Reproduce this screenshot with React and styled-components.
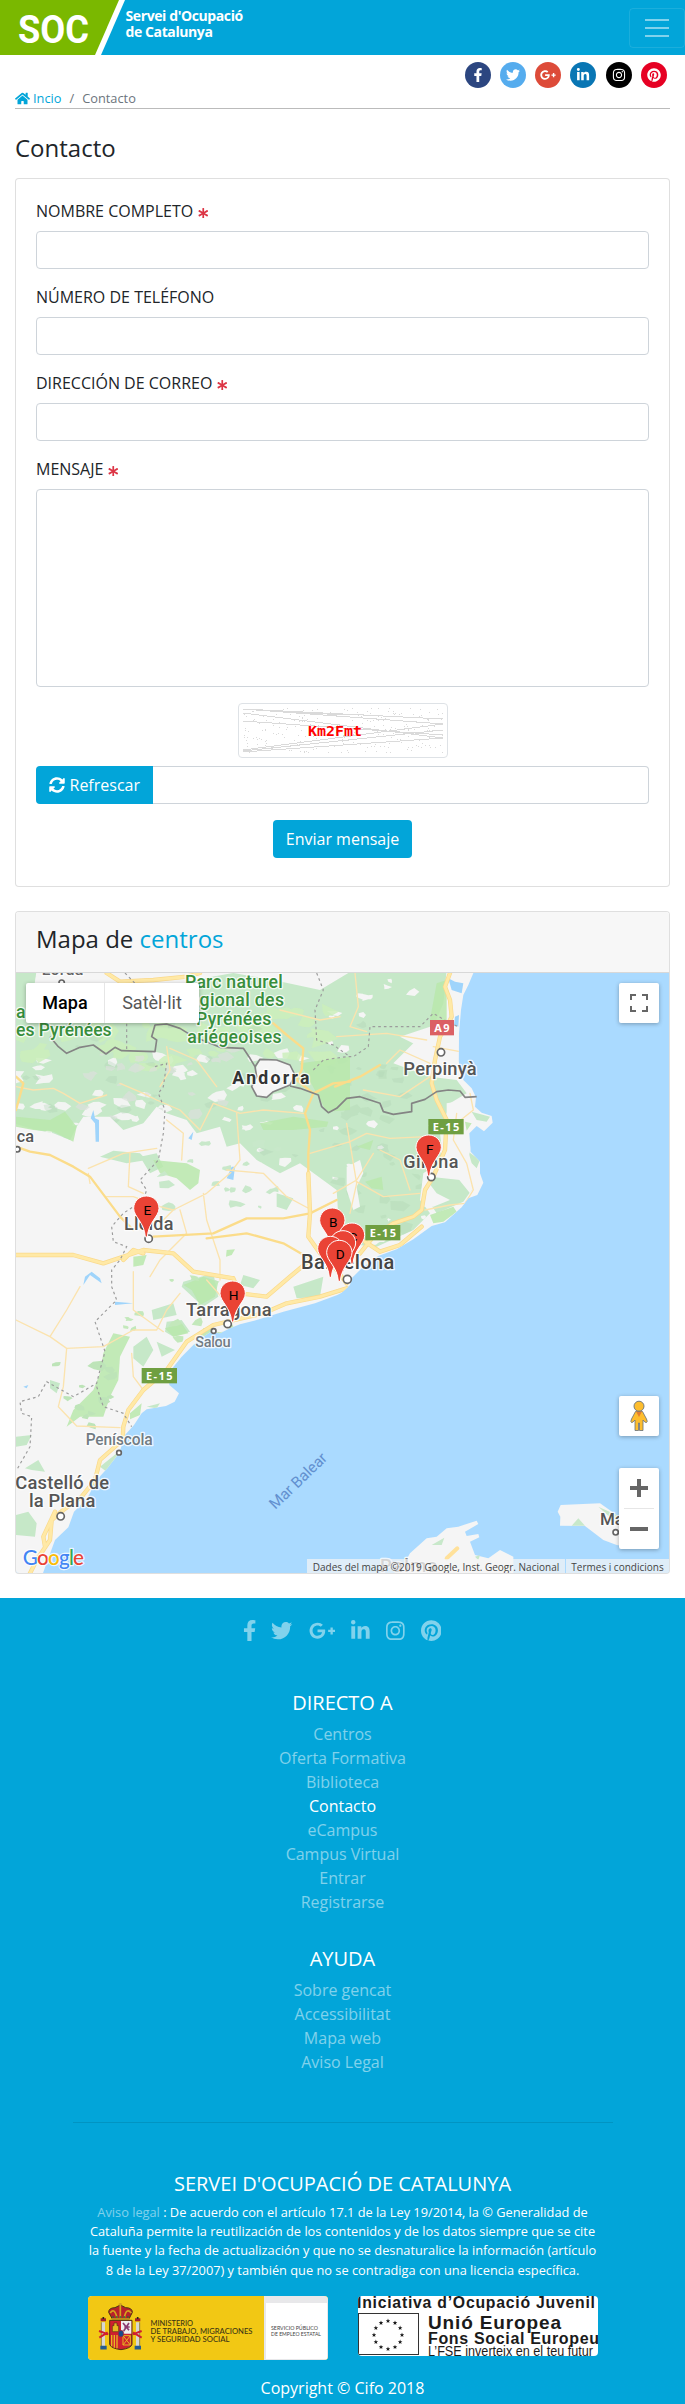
import React from "react";
import styled, { createGlobalStyle, css } from "styled-components";
import {
  FaFacebookF,
  FaTwitter,
  FaGooglePlusG,
  FaLinkedinIn,
  FaInstagram,
  FaPinterest,
  FaHome,
  FaSyncAlt,
  FaAsterisk,
} from "react-icons/fa";

const BLUE = "#02a5d9";

const GlobalStyle = createGlobalStyle`
  *, *::before, *::after { box-sizing: border-box; }
  body {
    margin: 0;
    background: #fff;
    color: #212529;
    font-family: "Open Sans", "Noto Sans", sans-serif;
    font-size: 16px;
    line-height: 1.5;
  }
  a { text-decoration: none; color: ${BLUE}; }
`;

/* ---------- header ---------- */

const Navbar = styled.header`
  display: flex;
  align-items: center;
  justify-content: space-between;
  height: 55px;
  background: ${BLUE};
`;

const Brand = styled.a`
  display: flex;
  height: 55px;
`;

const BrandName = styled.span`
  padding-top: 8px;
  color: #fff;
  font-size: 14px;
  font-weight: 700;
  line-height: 16px;
  letter-spacing: -0.4px;
`;

const Toggler = styled.button`
  width: 56px;
  height: 40px;
  padding: 0;
  display: flex;
  align-items: center;
  justify-content: center;
  background: transparent;
  border: 1px solid rgba(255, 255, 255, 0.1);
  border-radius: 4px;
`;

/* ---------- page ---------- */

const Container = styled.main`
  padding: 7px 15px 24px;
`;

const SocialBar = styled.nav`
  display: flex;
  justify-content: flex-end;
  gap: 9.3px;
  padding-right: 3px;
  height: 26px;
`;

const SocialBadge = styled.a`
  display: flex;
  align-items: center;
  justify-content: center;
  width: 26px;
  height: 26px;
  border-radius: 50%;
  color: #fff;
  font-size: ${(p) => p.$size || 14}px;
  background: ${(p) => p.$bg};
`;

const Breadcrumb = styled.nav`
  display: flex;
  height: 21px;
  font-size: 12.8px;
  line-height: 21px;
  color: #6c757d;
  border-bottom: 1px solid #bbb;

  a { display: flex; align-items: center; gap: 3px; }
  svg { font-size: 15px; }
  i { font-style: normal; padding: 0 8px; }
`;

const PageTitle = styled.h1`
  margin: 24px 0 16px;
  font-size: 24px;
  font-weight: 400;
  line-height: 29px;
`;

const Card = styled.section`
  border: 1px solid rgba(0, 0, 0, 0.125);
  border-radius: 4px;
  background: #fff;
  overflow: hidden;
`;

const FormCard = styled(Card)`
  height: 709px;
  padding: 20px;
`;

const Field = styled.div`
  margin-bottom: 16px;
`;

const Label = styled.label`
  display: flex;
  align-items: center;
  gap: 5px;
  height: 24px;
  margin-bottom: 8px;

  svg { color: #dc3545; font-size: 10.5px; margin-top: 4px; }
`;

const control = css`
  display: block;
  width: 100%;
  padding: 6px 12px;
  border: 1px solid #ced4da;
  border-radius: 4px;
  background: #fff;
  font: inherit;
  outline: none;
  resize: none;
`;

const Input = styled.input`
  ${control}
  height: 38px;
`;

const TextArea = styled.textarea`
  ${control}
  height: 198px;
`;

const Captcha = styled.div`
  display: flex;
  width: 210px;
  height: 55px;
  margin: 0 auto 8px;
  padding: 4px;
  border: 1px solid #dee2e6;
  border-radius: 4px;
`;

const InputGroup = styled.div`
  display: flex;
  margin-bottom: 16px;

  input { border-left: 0; border-radius: 0 4px 4px 0; }
`;

const Button = styled.button`
  display: flex;
  align-items: center;
  gap: 4.5px;
  flex: none;
  height: 38px;
  padding: 0 13px;
  border: 0;
  border-radius: ${(p) => (p.$joined ? "4px 0 0 4px" : "4px")};
  margin: ${(p) => (p.$joined ? "0" : "0 auto")};
  background: ${BLUE};
  color: #fff;
  font: inherit;
`;

const MapCard = styled(Card)`
  margin-top: 24px;
`;

const CardHeader = styled.h2`
  margin: 0;
  height: 61px;
  padding: 12px 20px;
  font-size: 24px;
  font-weight: 400;
  line-height: 29px;
  background: #f7f7f7;
  border-bottom: 1px solid rgba(0, 0, 0, 0.125);
`;

/* ---------- map ---------- */

const MapFrame = styled.div`
  position: relative;
  height: 600px;
  background: #aadaff;
  font-family: Roboto, sans-serif;

  > svg { display: block; }
`;

const MapControl = styled.div`
  position: absolute;
  display: flex;
  flex-direction: ${(p) => (p.$column ? "column" : "row")};
  align-items: center;
  justify-content: center;
  top: ${(p) => p.$top}px;
  ${(p) => (p.$left ? `left: ${p.$left}px;` : "right: 10px; width: 40px;")}
  height: ${(p) => p.$height || 40}px;
  background: #fff;
  border-radius: 2px;
  box-shadow: 0 1px 4px rgba(0, 0, 0, 0.3);
`;

const MapType = styled.span`
  width: ${(p) => p.$width}px;
  line-height: 40px;
  text-align: center;
  font-size: 18px;
  font-weight: ${(p) => (p.$active ? 500 : 400)};
  color: ${(p) => (p.$active ? "#000" : "#565656")};
  border-right: ${(p) => (p.$active ? "1px solid #e6e6e6" : "0")};
`;

const Attribution = styled.div`
  position: absolute;
  right: 0;
  bottom: 0;
  display: flex;
  gap: 1px;
  height: 14px;
  font: 10px/17px "Open Sans", sans-serif;
  color: #444;
  white-space: nowrap;

  span {
    background: rgba(245, 245, 245, 0.7);
    text-align: center;
  }
  span:first-child { width: 258px; }
  span:last-child { width: 103px; }
`;

/* ---------- footer ---------- */

const Footer = styled.footer`
  display: flex;
  flex-direction: column;
  align-items: center;
  height: 806px;
  padding-top: 21.5px;
  background: ${BLUE};
  color: #fff;
  text-align: center;
`;

const FooterSocial = styled.nav`
  display: flex;
  gap: 16px;
  height: 22px;
  margin: 0 0 48.5px;
  color: rgba(255, 255, 255, 0.5);
`;

const FooterIcon = styled.a`
  display: flex;
  justify-content: center;
  width: ${(p) => p.$width}px;
  height: 21.33px;
  color: inherit;

  svg { flex: none; width: ${(p) => Math.max(p.$width, 13.33)}px; height: 21.33px; }
`;

const FooterTitle = styled.h5`
  margin: 0 0 6px;
  font-size: 20px;
  font-weight: 400;
  line-height: 26px;
`;

const LinkList = styled.ul`
  list-style: none;
  margin: 0 0 32px;
  padding: 0;
`;

const FooterLink = styled.a`
  display: block;
  height: 24px;
  color: ${(p) => (p.$active ? "#fff" : "rgba(255,255,255,.5)")};
`;

const Divider = styled.hr`
  width: 540px;
  margin: 16px 0 48px;
  border: 0;
  border-top: 1px solid rgba(0, 0, 0, 0.1);
`;

const Legal = styled.p`
  width: 512px;
  margin: 0 0 16px;
  font-size: 12.8px;
  line-height: 19.2px;

  a { color: rgba(255, 255, 255, 0.5); }
`;

const Logos = styled.div`
  display: flex;
  align-items: flex-start;
  gap: 30px;
  height: 64px;
  margin: 0 0 16px 1px;
`;

const LogoBox = styled.div`
  width: 240px;
  height: ${(p) => p.$height}px;
  border-radius: 4px;
  overflow: hidden;
  background: #fff;

  svg { display: block; }
`;

/* ---------- drawings ---------- */

function rng(seed) {
  let s = seed;
  return () => {
    s = (s * 16807) % 2147483647;
    return s / 2147483647;
  };
}

function shards(seed, count, [x0, y0, x1, y1], min, max) {
  const r = rng(seed);
  let d = "";
  for (let i = 0; i < count; i++) {
    const cx = x0 + r() * (x1 - x0);
    const cy = y0 + r() * (y1 - y0);
    const size = min + r() * (max - min);
    const n = 5 + Math.floor(r() * 4);
    for (let k = 0; k < n; k++) {
      const a = (k / n) * Math.PI * 2;
      const q = size * (0.35 + r() * 0.75);
      d += `${k ? "L" : "M"}${(cx + Math.cos(a) * q * 1.25).toFixed(0)} ${(cy + Math.sin(a) * q * 0.75).toFixed(0)}`;
    }
    d += "Z";
  }
  return d;
}

const LAND =
  "M40 30H1424L1405 75 1390 105 1383 150 1377 220 1376 305 1390 360 1415 385 1428 412 1425 440 1445 458 1475 468 1478 488 1452 514 1430 498 1408 520 1412 575 1440 605 1440 640 1450 668 1432 705 1405 715 1385 742 1335 787 1295 798 1240 838 1190 868 1135 888 1085 925 1055 955 1050 975 1025 998 1012 1005 945 1030 850 1055 770 1080 720 1093 690 1105 660 1120 630 1117 595 1140 545 1190 505 1240 508 1275 537 1300 524 1325 498 1338 440 1348 425 1360 402 1395 375 1425 358 1478 322 1525 290 1560 262 1615 222 1655 205 1702 165 1740 125 1850H40Z";

const GREENS = [
  "M40 30H110L100 100 160 150 240 170 330 150 460 170 470 100 580 60 700 39 820 60 960 90 1060 30H1340L1330 130 1300 200 1240 250 1180 310 1290 350 1370 360 1400 400 1350 430 1320 520 1330 600 1270 640 1260 720 1290 760 1240 810 1130 860 1020 850 1010 690 900 610 840 640 770 600 720 550 680 560 660 500 590 520 560 480 500 460 470 440 430 490 370 510 330 470 250 470 230 500 210 540 160 520 110 510 40 490Z",
  "M820 130L960 120 1050 39V560L980 580 880 610 800 590 740 500 760 400 820 360 760 280Z",
  "M300 590L340 572 420 580 440 600 380 610Z", "M420 590L470 580 490 620 450 640Z",
  "M830 700L880 715 860 750 830 740Z", "M1000 840L1035 815 1050 850 1010 870Z",
  "M1290 650L1380 660 1415 690 1390 725 1310 760 1290 730Z", "M1405 575L1440 600 1430 625 1415 610Z",
  "M1415 455L1470 470 1460 485 1430 480Z", "M550 965L640 940 655 1010 610 1040 545 980Z",
  "M500 1085L545 1080 570 1115 520 1130 495 1115Z", "M455 1050L520 1030 530 1065 460 1080Z",
  "M880 980L970 950 960 1010 890 1015Z", "M730 945L780 960 760 985 720 975Z",
  "M400 1160L440 1130 460 1170 430 1220 400 1195Z", "M470 1145L525 1170 485 1190Z",
  "M150 1260L180 1270 170 1300 150 1285Z", "M48 1430L95 1425 80 1455 48 1460Z",
  "M75 1525L115 1500 135 1535 95 1530Z", "M48 1665L85 1655 110 1690 105 1730 48 1725Z",
  "M300 1520L350 1480 350 1505 320 1535Z", "M440 1370L475 1362 455 1385Z", "M440 1340L480 1330 470 1345Z",
];

const BRIGHT = [
  "M460 600L560 610 600 630 595 670 570 690 530 655 480 640Z",
  "M780 490L880 470 985 485 980 500 880 510 790 510Z",
  "M48 470L150 480 195 455 230 500 220 545 160 515 100 510 48 500Z",
  "M340 1120L390 1130 360 1190 355 1260 330 1310 310 1370 240 1370 200 1400 220 1350 280 1290 300 1240 310 1180Z",
  "M1095 665L1145 650 1150 690 1115 685Z", "M1290 765L1360 740 1370 755 1330 785 1300 790Z",
  "M550 975L610 950 655 965 645 1010 600 1035 575 990Z", "M400 890L440 885 430 915 400 920Z",
  "M680 870L705 868 695 885 678 890Z", "M495 1105L545 1090 565 1120 520 1130Z",
  "M390 1360L425 1330 420 1365 390 1378Z", "M1310 70L1290 180 1340 200 1340 60Z",
  "M900 310L1050 290V450L980 455 950 400Z", "M1395 485L1415 490 1400 512Z", "M1070 560L1120 540 1110 570Z",
];

const ROADS_THIN =
  "M360 370L430 400 470 420 540 450 600 510 640 430 720 460 790 450 910 460M500 260L510 330 480 380M510 265L590 300 650 380M500 480L550 520 545 600M710 460L720 600 690 640 620 700 520 750 480 790M48 1080L150 1130 200 1165 310 1160 400 1110 470 1110 500 1050 540 1000M200 1165L190 1280 175 1340 230 1398 360 1403M150 1130L200 1050 240 980M265 625L370 580 470 565M265 640L270 670M320 710L400 710 480 740 520 750M390 580L385 680 430 700M610 700L620 780 660 900 660 960M540 750L560 820 480 900 450 950M680 630L790 640 860 710 935 750M930 580L1050 545 1100 520 1170 535 1280 530M1040 490L1055 580 1070 670 1050 760M1070 665L1150 710 1260 700M1070 660L1000 700M1120 580L1070 660M1140 570L1200 600 1230 690M1370 460L1360 540 1400 610 1420 690 1395 730 1350 735 1275 750M1410 400L1420 450 1370 490M1090 390L1200 410 1290 350M1290 310L1200 270 1160 310M1380 275L1300 260M1010 230L1160 220 1280 240M1065 39L1075 140 1050 200 1100 215M840 150L960 180 1020 170M48 380L100 390 160 385 190 400 240 430 320 405M400 935L400 1050 490 1115M395 1180L400 1250 430 1290M620 960L690 1040";

const ROADS_MID =
  "M820 190L860 225 910 265 905 330 890 360 940 400 1000 370 1050 365M1005 380L1080 350 1140 315M940 400L915 460 930 510 925 580M48 350L70 370 48 450M925 640L925 580M48 560L90 575 150 585 220 620 270 650 360 770 400 810M460 830L640 820 740 775 850 775 930 760 1010 720M620 835L740 820 850 850 920 890";

const ROADS_BIG =
  "M320 39L360 65 460 60 560 50 600 39M1350 39L1335 80 1350 120 1355 170 1340 200 1320 230 1305 300 1295 370 1310 420 1340 480 1335 570 1300 650 1275 690 1265 750 1240 770 1180 790 1120 830 1080 880M925 640L930 760 925 830 960 880 1010 930 1040 970M1140 875L1200 855 1265 800M1140 875L1095 845M48 885L220 885 310 910 430 870 520 880 580 935 700 955M430 880L400 870 370 900M700 955L720 1000 800 1010 870 950 930 900M1040 985L960 1010 860 1030 790 1060 640 1095 560 1145 500 1230 430 1290 385 1350 370 1400 368 1440 300 1500 285 1560 245 1610 190 1650 155 1680 150 1740 110 1800 90 1840M165 1655L130 1730 135 1760";

const BORDER =
  "M150 230L175 260 200 280 240 262 280 255 318 282 345 262 365 272 465 275 470 240 455 230 465 195 500 192 540 205 580 230 620 245 660 262 730 265 750 295 765 320M765 320L780 298 830 300 870 315 885 345 870 375 820 395 800 412 770 408 755 380 770 350ZM870 378L900 385 955 405 965 440 985 458 1010 445 1040 415 1080 410 1140 430 1150 455 1180 463 1235 455 1235 430 1275 418 1310 395 1345 390 1380 393 1395 412 1430 410";

const DOTTED =
  "M375 39L405 70 380 120 380 270M465 320L500 310 490 380 475 400 495 450 490 520 475 600 420 660 440 690 430 720 370 760 335 800 340 845 380 860 360 900 335 930 335 980 350 1020 285 1085 300 1130 315 1175 300 1230 290 1270 220 1310 140 1265 115 1310 60 1325 65 1360 95 1370 90 1460 50 1530M290 1280L310 1340 370 1360 395 1400M940 330L970 300 1040 290 1060 290 1105 260 1110 200 1260 200 1300 160 1350 190 1375 200M950 39L970 90 945 150 950 240 1000 255 1050 290";

const WATER =
  "M280 450L285 475 297 480 297 545 287 545 285 490 272 475ZM565 535L580 515 575 540ZM695 620L705 620 700 660 680 655ZM255 950L275 935 300 955 305 970 270 945 250 975ZM345 1025L400 1030 345 1035ZM70 1280L85 1275 80 1285ZM1345 55L1365 65 1390 70 1385 100 1355 90ZM1365 170L1377 165 1375 200 1362 195Z";

const PLAINS =
  "M110 39H320L340 100 290 160 180 160 100 100ZM400 39H560L520 90 460 100 400 80ZM1200 230L1290 200 1376 200 1376 305 1390 360 1320 350 1260 340 1220 280 1260 260ZM1340 430L1400 420 1370 500 1412 560 1405 600 1440 640 1410 700 1370 650 1330 630 1320 570 1340 520ZM1040 620L1080 600 1090 640 1070 680 1080 740 1060 750 1040 690ZM1280 660L1310 700 1350 720 1300 740 1265 740ZM770 320L780 298 830 300 870 315 885 345 870 375 820 395 800 412 770 408 755 380Z";

const ISLANDS =
  "M1190 1850L1230 1780 1280 1735 1310 1730 1340 1705 1375 1700 1430 1682 1435 1692 1395 1715 1400 1728 1435 1722 1438 1732 1410 1745 1425 1785 1465 1795 1500 1770 1540 1790V1850ZM1673 1655L1682 1635 1800 1630 1850 1665 1880 1700 1880 1760 1850 1755 1810 1740 1755 1698 1680 1697 1681 1670Z";

const CITY_DOTS = [
  [185, 68, 8], [1323, 277, 11], [1294, 651, 11], [446, 836, 11], [1042, 958, 12],
  [683, 1092, 11], [641, 1113, 7], [357, 1478, 7], [182, 1669, 11], [52, 568, 8], [1847, 1717, 8],
];

const PLACES = [
  ["Lorda", 125, 45, 125, 48, "#666", 500],
  ["Parc naturel", 555, 84, 293, 53, "#388e3c", 500],
  ["régional des", 550, 139, 302, 53, "#388e3c", 500],
  ["Pyrénées", 588, 194, 226, 53, "#388e3c", 500],
  ["ariégeoises", 562, 249, 283, 53, "#388e3c", 500],
  ["a", 48, 173, 27, 53, "#388e3c", 500],
  ["es Pyrénées", 48, 228, 287, 53, "#388e3c", 500],
  ["Andorra", 697, 373, 231, 53, "#333", 700],
  ["Perpinyà", 1210, 344, 220, 55, "#555", 500],
  ["Girona", 1210, 624, 165, 54, "#555", 500],
  ["Lleida", 372, 811, 148, 54, "#555", 500],
  ["Barcelona", 903, 926, 280, 60, "#444", 500],
  ["ca", 50, 545, 52, 49, "#555", 500],
  ["Tarragona", 558, 1068, 257, 55, "#555", 500],
  ["Salou", 586, 1162, 106, 44, "#717b83", 500],
  ["Peníscola", 257, 1455, 201, 47, "#717b83", 500],
  ["Castelló de", 46, 1587, 281, 55, "#555", 500],
  ["la Plana", 87, 1642, 199, 55, "#555", 500],
  ["Palma", 1140, 1835, 172, 55, "#888", 500],
  ["Maó", 1800, 1695, 100, 51, "#555", 500],
];

const SHIELDS = [
  ["A9", 1290, 180, 72, "#db6064"],
  ["E-15", 1285, 477, 106, "#6f9f41"],
  ["E-15", 1096, 795, 105, "#6f9f41"],
  ["E-15", 425, 1224, 106, "#6f9f41"],
];

const PINS = [
  ["F", 1286, 525], ["E", 439, 708], ["B", 997, 744], ["C", 1056, 789],
  ["", 1029, 812], ["", 991, 829], ["D", 1018, 841], ["H", 698, 963],
];

function Terrain() {
  return (
    <svg width="653" height="600" viewBox="48 39 1959 1800">
      <defs>
        <clipPath id="land"><path d={LAND} /></clipPath>
        <clipPath id="hills"><path d={GREENS[0] + GREENS[1]} /></clipPath>
      </defs>
      <path d={LAND} fill="#f5f5f5" />
      <g clipPath="url(#land)">
        <path d={GREENS.join("")} fill="#c6e8c8" />
        <g clipPath="url(#hills)">
          <path d={shards(17, 30, [48, 290, 680, 540], 12, 32)} fill="#f2f4f2" />
          <path d={shards(91, 20, [660, 280, 940, 640], 8, 24)} fill="#f3f5f3" />
          <path d={shards(44, 10, [990, 60, 1300, 300], 8, 22)} fill="#f5f5f5" />
          <path d={shards(19, 14, [950, 480, 1320, 850], 7, 20)} fill="#f5f5f5" />
          <path d={shards(72, 50, [60, 150, 1000, 320], 16, 46)} fill="#cbeebb" opacity=".85" />
          <path d={shards(53, 50, [60, 190, 1300, 600], 8, 24)} fill="#a9cbb0" opacity=".28" />
          <path d={shards(29, 22, [250, 270, 700, 480], 8, 24)} fill="#dcdfdc" opacity=".7" />
          <path d={shards(66, 24, [1020, 300, 1260, 840], 10, 28)} fill="#b3d9b5" opacity=".45" />
        </g>
        <path d={PLAINS} fill="#f5f5f5" />
        <path d={BRIGHT.join("")} fill="#b9e8ac" opacity=".85" />
        <path d={shards(38, 18, [430, 550, 900, 740], 7, 22)} fill="#c8e8ca" />
        <path d={shards(81, 16, [380, 950, 760, 1180], 7, 22)} fill="#c3e8bb" />
        <path d={shards(23, 12, [170, 1210, 340, 1400], 10, 24)} fill="#bde4b8" />
        <path d={WATER} fill="#9fd4fb" />
        <g fill="none" strokeLinejoin="round" strokeLinecap="round">
          <path d={ROADS_THIN} stroke="#fbe3ae" strokeWidth="4" />
          <path d={ROADS_MID} stroke="#fbdc8a" strokeWidth="7" />
          <path d={ROADS_BIG} stroke="#fad98b" strokeWidth="13" />
          <path d={ROADS_BIG} stroke="#ffe9a6" strokeWidth="9" />
        </g>
      </g>
      <path d={BORDER} fill="none" stroke="#848484" strokeWidth="5" strokeLinejoin="round" />
      <path d={DOTTED} fill="none" stroke="#9c9c9c" strokeWidth="3.5" strokeDasharray="8 9" />
      <path d={ISLANDS} fill="#f5f5f5" />
      <path d="M1295 1755L1333 1733 1325 1755ZM1715 1697L1735 1675 1755 1697ZM1795 1640L1850 1665 1850 1690ZM1425 1790L1440 1785 1435 1800Z" fill="#c8e8ca" />
      <path d="M1340 1795L1372 1765" stroke="#ffe19a" strokeWidth="12" strokeLinecap="round" />

      {CITY_DOTS.map(([x, y, r]) => (
        <circle key={`${x}-${y}`} cx={x} cy={y} r={r} fill="#fff" stroke="#666" strokeWidth="5" />
      ))}
      {PLACES.map(([name, x, y, w, size, color, weight]) => (
        <text key={name + y} x={x} y={y} textLength={w} fontSize={size} fontWeight={weight} fill={color}
          stroke="#fff" strokeWidth="8" strokeOpacity=".8" strokeLinejoin="round" paintOrder="stroke">
          {name}
        </text>
      ))}
      <text transform="translate(826 1650) rotate(-44)" textLength="220" fontSize="46" fill="#6290cf">Mar Balear</text>
      {SHIELDS.map(([name, x, y, w, color]) => (
        <g key={`${x}-${y}`}>
          <rect x={x} y={y} width={w} height="46" fill={color} />
          <text x={x + w / 2} y={y + 35} textAnchor="middle" textLength={w - 26} fontSize="33" fontWeight="700"
            fontFamily="Open Sans" fill="#fff">{name}</text>
        </g>
      ))}
      {PINS.map(([letter, x, y]) => (
        <g key={`${x}-${y}`} transform={`translate(${x} ${y})`}>
          <path d="M0 0C-21 0-38 16-38 37C-38 62-6 78-3 123H3C6 78 38 62 38 37C38 16 21 0 0 0Z"
            fill="#ea4335" stroke="#fff" strokeWidth="3" />
          <text x="3" y="56" textAnchor="middle" fontSize="41" fill="#000">{letter}</text>
        </g>
      ))}
      <text x="68" y="1816" fontSize="62" fontFamily="Lato" textLength="184" stroke="#fff" strokeWidth="7" paintOrder="stroke" strokeOpacity=".8" fontWeight="500">
        <tspan fill="#4285f4">G</tspan><tspan fill="#ea4335">o</tspan><tspan fill="#fbbc05">o</tspan>
        <tspan fill="#4285f4">g</tspan><tspan fill="#34a853">l</tspan><tspan fill="#ea4335">e</tspan>
      </text>
    </svg>
  );
}

function CentresMap() {
  return (
    <MapFrame>
      <Terrain />
      <MapControl $top={10} $left={10}>
        <MapType $active $width={79}>Mapa</MapType>
        <MapType $width={94}>Satèl·lit</MapType>
      </MapControl>
      <MapControl $top={10}>
        <svg width="18" height="18" fill="none" stroke="#666" strokeWidth="2">
          <path d="M1 6V1H6M12 1H17V6M17 12V17H12M6 17H1V12" />
        </svg>
      </MapControl>
      <MapControl $top={423}>
        <svg width="18" height="32" viewBox="0 0 18 32">
          <path d="M5.5 11.5L1.5 19Q.2 22 1.5 22.5T5 20V30.500H8.500V23H9.500V30.500H13V20Q15 23 16.500 22.500T16.500 19L12.500 11.500Z" fill="#fdbd2e" stroke="#66707a" strokeWidth=".8" />
          <path d="M6 11.500H12L9 17Z" fill="#e57e2d" />
          <circle cx="9" cy="6.200" r="5" fill="#fdbd2e" stroke="#66707a" strokeWidth=".9" />
        </svg>
      </MapControl>
      <MapControl $top={495} $height={81} $column>
        <svg width="30" height="81">
          <path d="M6 20H24M15 11V29M6 61H24" stroke="#666" strokeWidth="4" />
          <path d="M0 40.500H30" stroke="#e6e6e6" />
        </svg>
      </MapControl>
      <Attribution>
        <span>Dades del mapa ©2019 Google, Inst. Geogr. Nacional</span>
        <span>Termes i condicions</span>
      </Attribution>
    </MapFrame>
  );
}

function SocMark() {
  return (
    <svg width="125.500" height="55" viewBox="0 0 125.500 55">
      <path d="M0 0H125L101 55H0Z" fill="#fff" />
      <path d="M0 0H119L95 55H0Z" fill="#7ab800" />
      <text x="18" y="42.500" fontFamily="Roboto" fontWeight="700" fontSize="38.500" textLength="71" lengthAdjust="spacingAndGlyphs" fill="#fff">SOC</text>
    </svg>
  );
}

function CaptchaImage() {
  const r = rng(77);
  const dots = Array.from({ length: 260 }, () => [Math.floor(r() * 200), Math.floor(r() * 45)]);
  return (
    <svg width="200" height="45" shapeRendering="crispEdges">
      {dots.map(([x, y], i) => <rect key={i} x={x} y={y} width="1" height="1" fill="#dadada" />)}
      <path d="M0 1L200 11M0 1L200 16M0 5L200 30M0 13L200 27M0 42L200 16M0 43L200 22M0 44L200 30M0 1L100 7" stroke="#dadada" fill="none" />
      <text x="65" y="28" textLength="54" fontFamily="DejaVu Sans Mono" fontWeight="700" fontSize="13.500" lengthAdjust="spacingAndGlyphs" fill="#f00">Km2Fmt</text>
    </svg>
  );
}

function MinistryLogo() {
  return (
    <svg width="240" height="64">
      <rect width="240" height="64" fill="#f2c814" />
      <rect x="176" width="64" height="64" fill="#e8e8ea" />
      <rect x="178" y="7" width="61" height="56" fill="#fff" />
      <g transform="translate(-13 -11) scale(.33333)">
        <path d="M112 102L101 82Q101 68 120 68L136 60 152 68Q172 68 172 82L162 102Z" fill="#b8202a" stroke="#4a3412" strokeWidth="3" />
        <path d="M110 102H164M106 84Q118 66 126 98M136 62V98M148 98Q154 66 169 84M136 54V63M131 58H141" fill="none" stroke="#d5a51c" strokeWidth="5" />
        <path d="M112 96H162" stroke="#2b6b3c" strokeWidth="4" strokeDasharray="5 6" />
        <path d="M104 106H171V178Q168 190 138 194Q107 190 104 178Z" fill="#cf202f" stroke="#4a3412" strokeWidth="3" />
        <path d="M138 108H169V146H138Z" fill="#eee" />
        <path d="M144 114L162 136M162 114L146 138M148 126H164" stroke="#8b3a70" strokeWidth="5" />
        <path d="M112 140V122H117V114H126V122H131V140Z" fill="#e7b921" stroke="#593313" strokeWidth="2" />
        <path d="M110 150V184M118 150V188M126 150V190" stroke="#e7b921" strokeWidth="4" />
        <path d="M144 152H166V180H144ZM144 152L166 180M166 152L144 180" stroke="#e7b921" strokeWidth="3" fill="none" />
        <ellipse cx="138" cy="146" rx="8" ry="10" fill="#194c8b" stroke="#b8202a" strokeWidth="2" />
        <path d="M85 112V184M188 112V184" stroke="#d7d7d2" strokeWidth="10" />
        <path d="M79 112V184M194 112V184" stroke="#6b6650" strokeWidth="2" />
        <path d="M77 104H93M180 104H196" stroke="#a3222a" strokeWidth="9" />
        <path d="M85 96V102M188 96V102" stroke="#2d241a" strokeWidth="5" />
        <path d="M72 138L100 148M73 158L98 142M200 138L173 148M200 158L174 142" stroke="#cf202f" strokeWidth="6" />
        <path d="M76 188H95M179 188H198" stroke="#245b91" strokeWidth="11" />
      </g>
      <g fontFamily="Lato" fontSize="7.600" fill="#3c3515" fontWeight="500">
        <text x="62.500" y="30" textLength="42.500" lengthAdjust="spacingAndGlyphs">MINISTERIO</text>
        <text x="62.500" y="38.300" textLength="102" lengthAdjust="spacingAndGlyphs">DE TRABAJO, MIGRACIONES</text>
        <text x="62.500" y="46.300" textLength="79" lengthAdjust="spacingAndGlyphs">Y SEGURIDAD SOCIAL</text>
      </g>
      <g fontFamily="Lato" fontSize="5.200" fill="#444">
        <text x="183" y="33.700" textLength="47" lengthAdjust="spacingAndGlyphs">SERVICIO PÚBLICO</text>
        <text x="183" y="39.700" textLength="50" lengthAdjust="spacingAndGlyphs">DE EMPLEO ESTATAL</text>
      </g>
    </svg>
  );
}

function EuropeLogo() {
  const stars = Array.from({ length: 12 }, (_, i) => {
    const a = (i * Math.PI) / 6;
    return [30 + Math.sin(a) * 14, 39 - Math.cos(a) * 14];
  });
  return (
    <svg width="240" height="60" fontFamily="Liberation Sans" fill="#1b1b1b">
      <rect x=".5" y="17.500" width="60" height="41" fill="#fff" stroke="#333" />
      {stars.map(([x, y]) => (
        <path key={`${x}-${y}`} transform={`translate(${x} ${y})`} d="M0-2.400L.6-.8 2.300-.7 1 .3 1.400 2 0 1 -1.400 2 -1 .3 -2.300-.7 -.6-.8Z" />
      ))}
      <text x="-1" y="12.300" fontSize="15.800" fontWeight="700" textLength="238">Iniciativa d’Ocupació Juvenil</text>
      <text x="70" y="32.700" fontSize="19" fontWeight="700" textLength="133">Unió Europea</text>
      <text x="70" y="47.700" fontSize="16" fontWeight="700" textLength="171">Fons Social Europeu</text>
      <text x="70" y="60" fontSize="13.800" textLength="165" lengthAdjust="spacingAndGlyphs">L’FSE inverteix en el teu futur</text>
    </svg>
  );
}

/* ---------- data ---------- */

const NETWORKS = [
  { name: "facebook", Icon: FaFacebookF, bg: "#2c4680", width: 11.5 },
  { name: "twitter", Icon: FaTwitter, bg: "#55acee", width: 21.33 },
  { name: "google", Icon: FaGooglePlusG, bg: "#dd4b39", size: 16, width: 26.67 },
  { name: "linkedin", Icon: FaLinkedinIn, bg: "#0976b4", width: 18.67 },
  { name: "instagram", Icon: FaInstagram, bg: "#000", width: 18.67 },
  { name: "pinterest", Icon: FaPinterest, bg: "#e60023", width: 20.67 },
];

const DIRECT = ["Centros", "Oferta Formativa", "Biblioteca", "Contacto", "eCampus", "Campus Virtual", "Entrar", "Registrarse"];
const HELP = ["Sobre gencat", "Accessibilitat", "Mapa web", "Aviso Legal"];

function FormField({ label, required, multiline }) {
  return (
    <Field>
      <Label>{label}{required && <FaAsterisk />}</Label>
      {multiline ? <TextArea /> : <Input />}
    </Field>
  );
}

function FooterLinks({ title, items, active }) {
  return (
    <>
      <FooterTitle>{title}</FooterTitle>
      <LinkList>
        {items.map((item) => (
          <li key={item}><FooterLink href="#" $active={item === active}>{item}</FooterLink></li>
        ))}
      </LinkList>
    </>
  );
}

export default function App() {
  return (
    <>
      <GlobalStyle />
      <Navbar>
        <Brand href="#">
          <SocMark />
          <BrandName>Servei d'Ocupació<br />de Catalunya</BrandName>
        </Brand>
        <Toggler aria-label="Menu">
          <svg width="24" height="18" stroke="rgba(255,255,255,.5)" strokeWidth="2">
            <path d="M0 1H24M0 9H24M0 17H24" />
          </svg>
        </Toggler>
      </Navbar>

      <Container>
        <SocialBar>
          {NETWORKS.map(({ name, Icon, bg, size }) => (
            <SocialBadge key={name} href="#" $bg={bg} $size={size}><Icon /></SocialBadge>
          ))}
        </SocialBar>
        <Breadcrumb>
          <a href="#"><FaHome />Incio</a><i>/</i><span>Contacto</span>
        </Breadcrumb>
        <PageTitle>Contacto</PageTitle>

        <FormCard>
          <FormField label="NOMBRE COMPLETO" required />
          <FormField label="NÚMERO DE TELÉFONO" />
          <FormField label="DIRECCIÓN DE CORREO" required />
          <FormField label="MENSAJE" required multiline />
          <Captcha><CaptchaImage /></Captcha>
          <InputGroup>
            <Button $joined><FaSyncAlt />Refrescar</Button>
            <Input />
          </InputGroup>
          <Button>Enviar mensaje</Button>
        </FormCard>

        <MapCard>
          <CardHeader>Mapa de <a href="#">centros</a></CardHeader>
          <CentresMap />
        </MapCard>
      </Container>

      <Footer>
        <FooterSocial>
          {NETWORKS.map(({ name, Icon, width }) => (
            <FooterIcon key={name} href="#" $width={width}><Icon /></FooterIcon>
          ))}
        </FooterSocial>
        <FooterLinks title="DIRECTO A" items={DIRECT} active="Contacto" />
        <FooterLinks title="AYUDA" items={HELP} />
        <Divider />
        <FooterTitle>SERVEI D'OCUPACIÓ DE CATALUNYA</FooterTitle>
        <Legal>
          <a href="#">Aviso legal</a> : De acuerdo con el artículo 17.1 de la Ley 19/2014, la © Generalidad de Cataluña
          permite la reutilización de los contenidos y de los datos siempre que se cite la fuente y la fecha de
          actualización y que no se desnaturalice la información (artículo 8 de la Ley 37/2007) y también que no se
          contradiga con una licencia específica.
        </Legal>
        <Logos>
          <LogoBox $height={64}><MinistryLogo /></LogoBox>
          <LogoBox $height={60}><EuropeLogo /></LogoBox>
        </Logos>
        <span>Copyright © Cifo 2018</span>
      </Footer>
    </>
  );
}
